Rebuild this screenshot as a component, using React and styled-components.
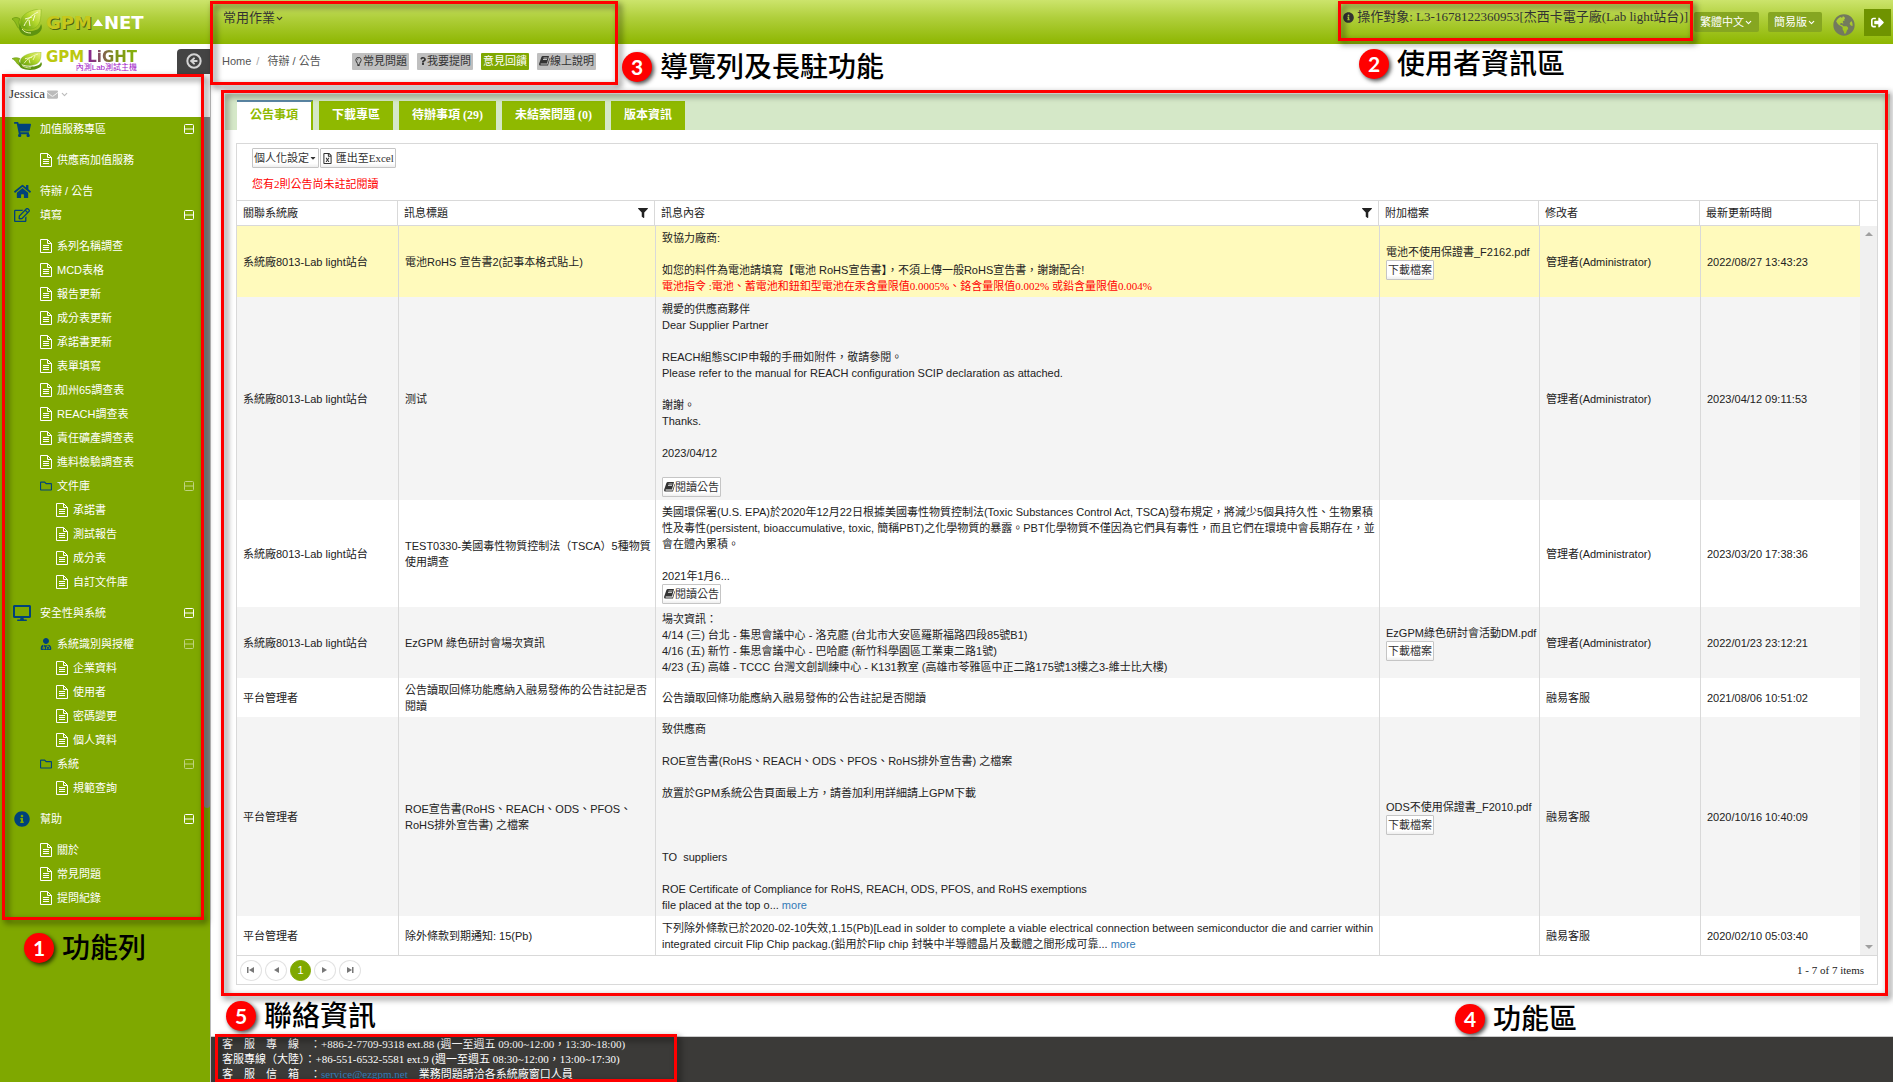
import React from "react";
import styled, { createGlobalStyle, css } from "styled-components";
import {
  FaShoppingCart,
  FaHome,
  FaRegEdit,
  FaDesktop,
  FaInfoCircle,
  FaRegFolder,
  FaUserMd,
  FaEnvelope,
  FaRegLightbulb,
  FaQuestion,
  FaFilter,
  FaRegFileExcel,
  FaGlobeAmericas,
  FaSignOutAlt,
  FaCaretDown,
} from "react-icons/fa";
import { ChevronDown, CircleArrowLeft } from "lucide-react";

const serif = `"Liberation Serif", "Noto Sans CJK TC", serif`;
const sans = `"Liberation Sans", "Noto Sans CJK TC", sans-serif`;

const GlobalStyle = createGlobalStyle`
  * {
    box-sizing: border-box;
  }
  body {
    margin: 0;
    background: #fff;
    color: #333;
    font-family: ${serif};
    font-size: 11px;
    line-height: 16px;
    overflow: hidden;
  }
  button, select {
    font: inherit;
    color: inherit;
    cursor: pointer;
  }
  a {
    color: inherit;
    text-decoration: none;
  }
  ul {
    list-style: none;
    margin: 0;
    padding: 0;
  }
`;

const Page = styled.div`
  position: relative;
  display: flex;
  flex-direction: column;
  height: 100vh;
  overflow: hidden;
`;

/* ---------- top bar ---------- */
const TopBar = styled.header`
  display: flex;
  align-items: center;
  height: 44px;
  flex: none;
  padding: 0 2px 0 12px;
  background: linear-gradient(#cce46c, #b0cf3c 40%, #8db600);
`;
const Logo = styled.a`
  display: flex;
  align-items: center;
  width: 211px;
`;
const LogoGpm = styled.b`
  margin-left: 4px;
  font: bold 18px "DejaVu Sans", sans-serif;
  color: #c6c81c;
  text-shadow: 1px 1px 0 #4d6410;
`;
const LogoNet = styled.span`
  font: bold 18px "DejaVu Sans", sans-serif;
  color: #fff;
`;
const TopMenu = styled.button`
  display: flex;
  align-items: center;
  align-self: flex-start;
  height: 36px;
  padding: 0;
  border: 0;
  background: none;
  font-size: 13px;
`;
const Operator = styled.span`
  display: flex;
  align-items: center;
  align-self: flex-start;
  gap: 3px;
  height: 34px;
  margin-left: auto;
  margin-right: 6px;
  font-size: 13px;
  white-space: nowrap;
`;
const PickBox = styled.label`
  display: flex;
  align-items: center;
  height: 20px;
  margin-right: 9px;
  padding: 0 6px;
  border-radius: 2px;
  background: #86a621;
  color: #fff;
  select {
    appearance: none;
    padding: 0;
    border: 0;
    background: none;
  }
`;
const Globe = styled.a`
  display: flex;
  margin: 5px 9px 0 2px;
  color: #737a5e;
`;
const Logout = styled.button`
  display: flex;
  align-items: center;
  justify-content: center;
  width: 27px;
  height: 27px;
  padding: 0;
  border: 0;
  background: #6f9300;
  color: #fff;
`;

/* ---------- sidebar ---------- */
const Columns = styled.div`
  display: flex;
  flex: 1;
  min-height: 0;
`;
const Sidebar = styled.aside`
  display: flex;
  flex-direction: column;
  flex: none;
  width: 211px;
  border-right: 1px solid #bbb;
  background: #fff;
`;
const Brand = styled.div`
  display: flex;
  align-items: center;
  height: 34px;
  padding-left: 12px;
`;
const BrandName = styled.div`
  display: flex;
  flex-direction: column;
  align-items: flex-end;
  margin-left: 4px;
`;
const BrandTitle = styled.b`
  font: bold 15px/13px "DejaVu Sans", sans-serif;
  color: #bcc810;
  span {
    margin-left: 3px;
    background: linear-gradient(90deg, #8a1a9c, #7d8f1a 55%, #86b50b);
    background-clip: text;
    color: transparent;
  }
`;
const BrandHost = styled.small`
  font: 8px/8px ${sans};
  color: #a216c8;
`;
const Collapse = styled.button`
  display: flex;
  align-items: center;
  justify-content: center;
  width: 33px;
  height: 25px;
  margin-left: auto;
  padding: 0;
  border: 0;
  border-radius: 4px 0 0 0;
  background: #444;
  color: #d5d5d5;
`;
const UserRow = styled.button`
  display: flex;
  align-items: center;
  gap: 2px;
  height: 39px;
  padding: 0 9px 7px;
  border: 0;
  background: none;
  font-size: 13px;
  svg {
    color: #bbb;
  }
`;
const NavArea = styled.nav`
  display: flex;
  flex: 1;
  min-height: 0;
  background: #7fa800;
  color: #fff;
  font-family: ${sans};
`;
const NavTree = styled.ul`
  flex: 1;
`;
const SubTree = styled.ul`
  padding: ${(p) => (p.$deep ? "0" : "7px 0")};
`;
const NavLink = styled.a`
  display: flex;
  align-items: center;
  height: 24px;
  padding-left: ${(p) => [12, 40, 56][p.$level]}px;
  padding-right: 10px;
`;
const NavIcon = styled.span`
  display: flex;
  align-items: center;
  justify-content: ${(p) => (p.$level ? "flex-start" : "center")};
  width: ${(p) => (p.$level ? 17 : 20)}px;
  margin-right: ${(p) => (p.$level ? 0 : 8)}px;
  color: ${(p) => (p.$light ? "#fff" : "#00427a")};
`;
const Toggle = styled.span`
  display: flex;
  margin-left: auto;
  opacity: ${(p) => (p.$dim ? 0.5 : 1)};
`;
const NavThumb = styled.div`
  width: 6px;
  height: 691px;
  border-radius: 0 0 4px 4px;
  background: #888;
`;

/* ---------- main column ---------- */
const Main = styled.main`
  display: flex;
  flex-direction: column;
  flex: 1;
  min-width: 0;
`;
const Crumbs = styled.div`
  display: flex;
  align-items: center;
  gap: 8px;
  height: 34px;
  margin-bottom: 16px;
  padding-left: 11px;
  font-family: ${sans};
`;
const Path = styled.div`
  width: 122px;
  color: #555;
  i {
    margin: 0 5px;
    font-style: normal;
    color: #aaa;
  }
`;
const HelpButton = styled.button`
  display: flex;
  align-items: center;
  height: 17px;
  padding: 0 2px;
  border: 0;
  border-radius: 1px;
  background: ${(p) => (p.$green ? "#7fa800" : "#bfbfbf")};
  color: ${(p) => (p.$green ? "#fff" : "#333")};
`;
const TabBar = styled.div`
  display: flex;
  align-items: flex-end;
  gap: 6px;
  height: 36px;
  margin: 0 3px 13px 14px;
  padding-left: 12px;
  background: #d5e8c8;
`;
const Tab = styled.button`
  height: 29px;
  padding: 0 13px 2px;
  border: 0;
  background: #8fb900;
  color: #fff;
  font-size: 12px;
  font-weight: bold;
  ${(p) =>
    p.$active &&
    css`
      height: 30px;
      border-top: 2px solid #5b87a5;
      border-right: 2px solid #8fb900;
      background: #fff;
      color: #8fb900;
    `}
`;
const Grid = styled.section`
  margin: 0 15px 0 25px;
  border: 1px solid #d9d9d9;
`;
const GridTools = styled.div`
  height: 57px;
  padding: 4px 15px 0;
  border-bottom: 1px solid #d9d9d9;
`;
const ToolRow = styled.div`
  display: flex;
  gap: 1px;
`;
const Unread = styled.p`
  margin: 8px 0 0;
  color: #f00;
`;
const SmallButton = styled.button`
  display: inline-flex;
  align-items: center;
  height: 20px;
  padding: 0 1px;
  border: 1px solid #c5c5c5;
  border-radius: 1px;
  background: linear-gradient(#fff 80%, #eee);
  color: #333;
  vertical-align: top;
`;
const GridBody = styled.div`
  display: flex;
`;
const Table = styled.table`
  flex: 1;
  width: 100%;
  table-layout: fixed;
  border-collapse: separate;
  border-spacing: 0;
  font-family: ${sans};
  color: #222;
`;
const HeadCell = styled.th`
  height: 25px;
  padding: 0 6px;
  border-right: 1px solid #d9d9d9;
  border-bottom: 1px solid #d9d9d9;
  font-weight: normal;
  text-align: left;
  div {
    display: flex;
    align-items: center;
    justify-content: space-between;
  }
`;
const Row = styled.tr`
  background: ${(p) => (p.$unread ? "#fffabc" : p.$alt ? "#f4f4f4" : "#fff")};
`;
const Cell = styled.td`
  padding: 4px 0 3px 6px;
  border-left: 1px solid #d9d9d9;
  &:first-child {
    border-left: 0;
  }
`;
const Line = styled.div`
  min-height: 16px;
  white-space: pre-wrap;
  ${(p) =>
    p.$warn &&
    css`
      color: #f00;
      font-family: ${serif};
    `}
`;
const FileName = styled.div`
  white-space: nowrap;
`;
const More = styled.a`
  color: #337ab7;
`;
const ScrollTrack = styled.div`
  display: flex;
  flex-direction: column;
  justify-content: space-between;
  align-items: center;
  width: 17px;
  padding: 6px 0;
  margin-top: 25px;
  background: #f0f0f0;
`;
const Arrow = styled.i`
  border: 4px solid transparent;
  ${(p) => (p.$up ? "border-bottom-color: #a0a0a0; border-top: 0;" : "border-top-color: #a0a0a0; border-bottom: 0;")}
`;
const Pager = styled.div`
  display: flex;
  align-items: center;
  gap: 3px;
  height: 29px;
  padding: 0 13px 0 3px;
  border-top: 1px solid #d9d9d9;
  color: #222;
  span {
    margin-left: auto;
  }
`;
const PageButton = styled.button`
  display: flex;
  align-items: center;
  justify-content: center;
  width: ${(p) => (p.$current ? 21 : 22)}px;
  height: 21px;
  padding: 0;
  border: 1px solid ${(p) => (p.$current ? "#7fa800" : "#e2e2e2")};
  border-radius: 50%;
  background: ${(p) => (p.$current ? "#7fa800" : "#fff")};
  color: ${(p) => (p.$current ? "#fff" : "#777")};
  font-family: ${sans};
`;
const Footer = styled.footer`
  height: 46px;
  margin-top: auto;
  padding-left: 11px;
  overflow: hidden;
  border-top: 1px solid #ccc;
  background: #3b3a38;
  color: #fff;
  line-height: 15px;
  a {
    color: #337ab7;
    margin-right: 11px;
  }
`;

/* ---------- call-outs drawn over the page ---------- */
const Frame = styled.div`
  position: absolute;
  top: ${(p) => p.$top}px;
  left: ${(p) => p.$left}px;
  right: ${(p) => p.$right}px;
  width: ${(p) => p.$width}px;
  height: ${(p) => p.$height}px;
  border: 3px solid #f00;
  filter: drop-shadow(3px 3px 3px rgba(0, 0, 0, 0.6));
  pointer-events: none;
`;
const Note = styled.div`
  position: absolute;
  top: ${(p) => p.$top}px;
  left: ${(p) => p.$left}px;
  right: ${(p) => p.$right}px;
  display: flex;
  align-items: center;
  gap: 8px;
  color: #000;
  font: 500 28px/32px "Noto Sans CJK TC", sans-serif;
  white-space: nowrap;
  b {
    width: 30px;
    height: 30px;
    margin-top: 4px;
    border-radius: 50%;
    background: #f00;
    color: #fff;
    font: bold 21px/30px "Lato", sans-serif;
    text-align: center;
    box-shadow: 2px 2px 4px rgba(0, 0, 0, 0.7);
  }
`;

const Leaf = ({ width, height }) => (
  <svg width={width} height={height} viewBox="0 0 30 27" preserveAspectRatio="none">
    <defs>
      <linearGradient id="leaf" x1="0" y1="1" x2="1" y2="0">
        <stop offset="0" stopColor="#5f9a0c" />
        <stop offset="0.55" stopColor="#b6d92e" />
        <stop offset="1" stopColor="#f0f58a" />
      </linearGradient>
    </defs>
    <path d="M0 10c2-2 6-2 8 0-2 3-1 7 2 11C4 20 5 13 0 10z" fill="#8dbb1c" stroke="#5f8f0c" strokeWidth=".6" />
    <path d="M29 0c0 9 0 18-9 20-5 1-9 0-11-3C6 8 15 1 29 0z" fill="url(#leaf)" stroke="#7fae14" strokeWidth=".5" />
    <path d="M26 3C20 6 15 10 12 17M20 8l-7 2M23 6l-2 6M17 11l1 6" fill="none" stroke="#f6fad0" strokeWidth="1" />
    <path d="M8 14c1 7 5 8 10 8 6 0 10-2 11-7 3 5-2 12-11 12C10 27 5 22 8 14z" fill="#5e9310" />
    <path d="M10 20c2 3 5 4 9 4" fill="none" stroke="#e6f2a0" strokeWidth="1" />
  </svg>
);

const FileIcon = () => (
  <svg width="12" height="14" viewBox="0 0 12 14" fill="none" stroke="currentColor">
    <path d="M.5.5h7l4 4v9H.5z" />
    <path d="M7.5.5v4h4M3 6.5h6M3 8.5h6M3 10.5h6" />
  </svg>
);

const BookIcon = () => (
  <svg width="11" height="10" viewBox="0 0 11 10">
    <path d="M3.500 0H10l-2 7.500H2c-.8 0-.8 1 0 1h6.500L10.500 2 11 2.500 9 9.500H1.500C.3 9.500-.2 8.500.2 7.500L2.500.8z" fill="currentColor" />
    <path d="M4.500 2h4M4 3.500h4" stroke="#fff" strokeWidth=".7" />
  </svg>
);

const MinusBox = () => (
  <svg width="10" height="10" viewBox="0 0 10 10" fill="none" stroke="currentColor">
    <rect x=".5" y=".5" width="9" height="9" rx="1" />
    <path d="M1 5h8" />
  </svg>
);

const PagerArrow = ({ back, edge }) => (
  <svg width="8" height="8" viewBox="0 0 8 8" fill="currentColor">
    <path d={back ? "M7 1v6L2 4z" : "M1 1v6l5-3z"} />
    {edge && <path d={back ? "M0 1h1.5v6H0z" : "M6 1h1.5v6H6z"} />}
  </svg>
);

const files = (...names) => names.map((label) => ({ label }));

const menu = [
  { label: "加值服務專區", icon: <FaShoppingCart size={17} />, children: files("供應商加值服務") },
  { label: "待辦 / 公告", icon: <FaHome size={17} /> },
  {
    label: "填寫",
    icon: <FaRegEdit size={16} />,
    children: [
      ...files(
        "系列名稱調查",
        "MCD表格",
        "報告更新",
        "成分表更新",
        "承諾書更新",
        "表單填寫",
        "加州65調查表",
        "REACH調查表",
        "責任礦產調查表",
        "進料檢驗調查表"
      ),
      {
        label: "文件庫",
        icon: <FaRegFolder size={12} />,
        children: files("承諾書", "測試報告", "成分表", "自訂文件庫"),
      },
    ],
  },
  {
    label: "安全性與系統",
    icon: <FaDesktop size={18} />,
    children: [
      {
        label: "系統識別與授權",
        icon: <FaUserMd size={12} />,
        children: files("企業資料", "使用者", "密碼變更", "個人資料"),
      },
      { label: "系統", icon: <FaRegFolder size={12} />, children: files("規範查詢") },
    ],
  },
  { label: "幫助", icon: <FaInfoCircle size={16} />, children: files("關於", "常見問題", "提問紀錄") },
];

const rows = [
  {
    unread: true,
    site: "系統廠8013-Lab light站台",
    title: "電池RoHS 宣告書2(記事本格式貼上)",
    lines: [
      "致協力廠商:",
      "",
      "如您的料件為電池請填寫【電池 RoHS宣告書】，不須上傳一般RoHS宣告書，謝謝配合!",
    ],
    warn: "電池指令 :電池、蓄電池和鈕釦型電池在汞含量限值0.0005%、鉻含量限值0.002% 或鉛含量限值0.004%",
    file: "電池不使用保證書_F2162.pdf",
    by: "管理者(Administrator)",
    time: "2022/08/27 13:43:23",
  },
  {
    site: "系統廠8013-Lab light站台",
    title: "测试",
    lines: [
      "親愛的供應商夥伴",
      "Dear Supplier Partner",
      "",
      "REACH組態SCIP申報的手冊如附件，敬請參閱。",
      "Please refer to the manual for REACH configuration SCIP declaration as attached.",
      "",
      "謝謝。",
      "Thanks.",
      "",
      "2023/04/12",
      "",
    ],
    read: true,
    by: "管理者(Administrator)",
    time: "2023/04/12 09:11:53",
  },
  {
    site: "系統廠8013-Lab light站台",
    title: "TEST0330-美國毒性物質控制法（TSCA）5種物質使用調查",
    lines: [
      "美國環保署(U.S. EPA)於2020年12月22日根據美國毒性物質控制法(Toxic Substances Control Act, TSCA)發布規定，將減少5個具持久性、生物累積性及毒性(persistent, bioaccumulative, toxic, 簡稱PBT)之化學物質的暴露。PBT化學物質不僅因為它們具有毒性，而且它們在環境中會長期存在，並會在體內累積。",
      "",
      "2021年1月6...",
    ],
    read: true,
    by: "管理者(Administrator)",
    time: "2023/03/20 17:38:36",
  },
  {
    site: "系統廠8013-Lab light站台",
    title: "EzGPM 綠色研討會場次資訊",
    lines: [
      "場次資訊：",
      "4/14 (三) 台北 - 集思會議中心 - 洛克廳 (台北市大安區羅斯福路四段85號B1)",
      "4/16 (五) 新竹 - 集思會議中心 - 巴哈廳 (新竹科學園區工業東二路1號)",
      "4/23 (五) 高雄 - TCCC 台灣文創訓練中心 - K131教室 (高雄市苓雅區中正二路175號13樓之3-維士比大樓)",
    ],
    file: "EzGPM綠色研討會活動DM.pdf",
    by: "管理者(Administrator)",
    time: "2022/01/23 23:12:21",
  },
  {
    site: "平台管理者",
    title: "公告讀取回條功能應納入融易發佈的公告註記是否閱讀",
    lines: ["公告讀取回條功能應納入融易發佈的公告註記是否閱讀"],
    by: "融易客服",
    time: "2021/08/06 10:51:02",
  },
  {
    site: "平台管理者",
    title: "ROE宣告書(RoHS、REACH、ODS、PFOS、RoHS排外宣告書) 之檔案",
    lines: [
      "致供應商",
      "",
      "ROE宣告書(RoHS、REACH、ODS、PFOS、RoHS排外宣告書) 之檔案",
      "",
      "放置於GPM系統公告頁面最上方，請善加利用詳細請上GPM下載",
      "",
      "",
      "",
      "TO  suppliers",
      "",
      "ROE Certificate of Compliance for RoHS, REACH, ODS, PFOS, and RoHS exemptions",
      "file placed at the top o... ",
    ],
    more: true,
    file: "ODS不使用保證書_F2010.pdf",
    by: "融易客服",
    time: "2020/10/16 10:40:09",
  },
  {
    site: "平台管理者",
    title: "除外條款到期通知: 15(Pb)",
    lines: [
      "下列除外條款已於2020-02-10失效,1.15(Pb)[Lead in solder to complete a viable electrical connection between semiconductor die and carrier within",
      "integrated circuit Flip Chip packag.(鉛用於Flip chip 封裝中半導體晶片及載體之間形成可靠... ",
    ],
    more: true,
    by: "融易客服",
    time: "2020/02/10 05:03:40",
  },
];

function NavItem({ item, level }) {
  return (
    <li>
      <NavLink href="#" $level={level}>
        <NavIcon $level={level} $light={!item.icon}>
          {item.icon || <FileIcon />}
        </NavIcon>
        {item.label}
        {item.children && (
          <Toggle $dim={level > 0}>
            <MinusBox />
          </Toggle>
        )}
      </NavLink>
      {item.children && (
        <SubTree $deep={level > 0}>
          {item.children.map((child) => (
            <NavItem key={child.label} item={child} level={level + 1} />
          ))}
        </SubTree>
      )}
    </li>
  );
}

function NoticeRow({ row, index }) {
  const last = row.lines.length - 1;
  return (
    <Row $unread={row.unread} $alt={index % 2 === 1}>
      <Cell>{row.site}</Cell>
      <Cell>{row.title}</Cell>
      <Cell>
        {row.lines.map((text, i) => (
          <Line key={i}>
            {text}
            {row.more && i === last && <More href="#">more</More>}
          </Line>
        ))}
        {row.warn && <Line $warn>{row.warn}</Line>}
        {row.read && (
          <SmallButton>
            <BookIcon />
            閱讀公告
          </SmallButton>
        )}
      </Cell>
      <Cell>
        {row.file && (
          <>
            <FileName>{row.file}</FileName>
            <SmallButton>下載檔案</SmallButton>
          </>
        )}
      </Cell>
      <Cell>{row.by}</Cell>
      <Cell>{row.time}</Cell>
    </Row>
  );
}

function Header() {
  return (
    <TopBar>
      <Logo href="#">
        <Leaf width={30} height={27} />
        <LogoGpm>GPM</LogoGpm>
        <svg width="12" height="8" viewBox="0 0 12 8">
          <path d="M1 8l5-7 5 7z" fill="#fff" />
        </svg>
        <LogoNet>NET</LogoNet>
      </Logo>
      <TopMenu>
        常用作業
        <ChevronDown size={9} strokeWidth={3} />
      </TopMenu>
      <Operator>
        <FaInfoCircle size={11} />
        操作對象: L3-1678122360953[杰西卡電子廠(Lab light站台)]
      </Operator>
      <PickBox>
        <select aria-label="語言">
          <option>繁體中文</option>
        </select>
        <ChevronDown size={9} strokeWidth={3} />
      </PickBox>
      <PickBox>
        <select aria-label="版本">
          <option>簡易版</option>
        </select>
        <ChevronDown size={9} strokeWidth={3} />
      </PickBox>
      <Globe href="#" aria-label="網站">
        <FaGlobeAmericas size={22} />
      </Globe>
      <Logout aria-label="登出">
        <FaSignOutAlt size={13} />
      </Logout>
    </TopBar>
  );
}

function Navigation() {
  return (
    <Sidebar>
      <Brand>
        <Leaf width={30} height={18} />
        <BrandName>
          <BrandTitle>
            GPM<span>LiGHT</span>
          </BrandTitle>
          <BrandHost>內測Lab測試主機</BrandHost>
        </BrandName>
        <Collapse aria-label="收合選單">
          <CircleArrowLeft size={16} strokeWidth={3} />
        </Collapse>
      </Brand>
      <UserRow>
        Jessica
        <FaEnvelope size={11} />
        <ChevronDown size={9} strokeWidth={3} />
      </UserRow>
      <NavArea>
        <NavTree>
          {menu.map((item) => (
            <NavItem key={item.label} item={item} level={0} />
          ))}
        </NavTree>
        <NavThumb />
      </NavArea>
    </Sidebar>
  );
}

function NoticeGrid() {
  return (
    <Grid>
      <GridTools>
        <ToolRow>
          <SmallButton>
            個人化設定
            <FaCaretDown size={8} />
          </SmallButton>
          <SmallButton>
            <FaRegFileExcel size={11} />
            &nbsp;匯出至Excel
          </SmallButton>
        </ToolRow>
        <Unread>您有2則公告尚未註記閱讀</Unread>
      </GridTools>
      <GridBody>
        <Table>
          <colgroup>
            <col width="161" />
            <col width="257" />
            <col />
            <col width="160" />
            <col width="161" />
            <col width="160" />
          </colgroup>
          <thead>
            <tr>
              <HeadCell>關聯系統廠</HeadCell>
              <HeadCell>
                <div>
                  訊息標題
                  <FaFilter size={10} />
                </div>
              </HeadCell>
              <HeadCell>
                <div>
                  訊息內容
                  <FaFilter size={10} />
                </div>
              </HeadCell>
              <HeadCell>附加檔案</HeadCell>
              <HeadCell>修改者</HeadCell>
              <HeadCell>最新更新時間</HeadCell>
            </tr>
          </thead>
          <tbody>
            {rows.map((row, i) => (
              <NoticeRow key={i} row={row} index={i} />
            ))}
          </tbody>
        </Table>
        <ScrollTrack>
          <Arrow $up />
          <Arrow />
        </ScrollTrack>
      </GridBody>
      <Pager>
        <PageButton aria-label="第一頁">
          <PagerArrow back edge />
        </PageButton>
        <PageButton aria-label="上一頁">
          <PagerArrow back />
        </PageButton>
        <PageButton $current>1</PageButton>
        <PageButton aria-label="下一頁">
          <PagerArrow />
        </PageButton>
        <PageButton aria-label="最後一頁">
          <PagerArrow edge />
        </PageButton>
        <span>1 - 7 of 7 items</span>
      </Pager>
    </Grid>
  );
}

function App() {
  return (
    <Page>
      <GlobalStyle />
      <Header />
      <Columns>
        <Navigation />
        <Main>
          <Crumbs>
            <Path>
              Home<i>/</i> 待辦 / 公告
            </Path>
            <HelpButton>
              <FaRegLightbulb size={9} />
              常見問題
            </HelpButton>
            <HelpButton>
              <FaQuestion size={8} />
              我要提問
            </HelpButton>
            <HelpButton $green>意見回饋</HelpButton>
            <HelpButton>
              <BookIcon />
              線上說明
            </HelpButton>
          </Crumbs>
          <TabBar>
            <Tab $active>公告事項</Tab>
            <Tab>下載專區</Tab>
            <Tab>待辦事項 (29)</Tab>
            <Tab>未結案問題 (0)</Tab>
            <Tab>版本資訊</Tab>
          </TabBar>
          <NoticeGrid />
          <Footer>
            <div>客　服　專　線　：+886-2-7709-9318 ext.88 (週一至週五 09:00~12:00，13:30~18:00)</div>
            <div>客服專線（大陸）：+86-551-6532-5581 ext.9 (週一至週五 08:30~12:00，13:00~17:30)</div>
            <div>
              客　服　信　箱　：<a href="mailto:service@ezgpm.net">service@ezgpm.net</a>
              業務問題請洽各系統廠窗口人員
            </div>
          </Footer>
        </Main>
      </Columns>

      <Frame $top={74} $left={2} $width={202} $height={846} />
      <Frame $top={1} $left={210} $width={408} $height={84} />
      <Frame $top={1} $right={200} $width={355} $height={40} />
      <Frame $top={90} $left={221} $right={5} $height={906} />
      <Frame $top={1034} $left={215} $width={462} $height={48} />
      <Note $top={929} $left={24}>
        <b>1</b>功能列
      </Note>
      <Note $top={45} $right={328}>
        <b>2</b>使用者資訊區
      </Note>
      <Note $top={48} $left={622}>
        <b>3</b>導覽列及長駐功能
      </Note>
      <Note $top={1000} $right={316}>
        <b>4</b>功能區
      </Note>
      <Note $top={997} $left={226}>
        <b>5</b>聯絡資訊
      </Note>
    </Page>
  );
}

export default App;
